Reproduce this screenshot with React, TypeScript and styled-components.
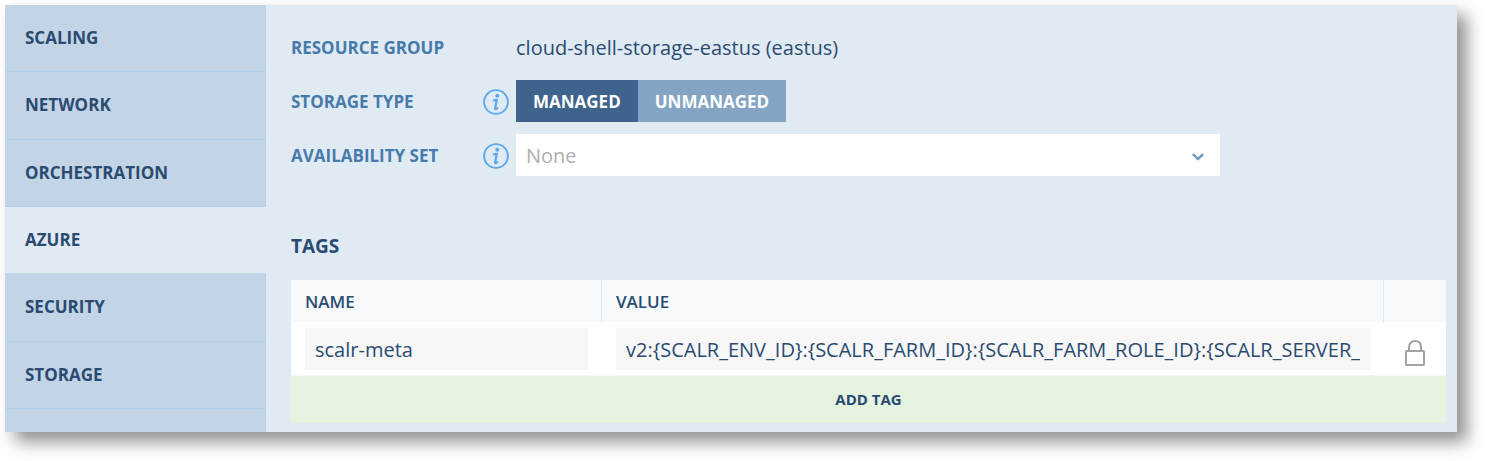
import React from "react";
import styled, { createGlobalStyle } from "styled-components";

const navy = "#2a4b71";

const GlobalStyle = createGlobalStyle`
  * { box-sizing: border-box; }
  body {
    margin: 0;
    background: #fff;
    color: ${navy};
    font-family: "Open Sans", "Noto Sans", sans-serif;
  }
  button, input, select { font-family: inherit; color: inherit; margin: 0; border: 0; border-radius: 0; }
`;

const Panel = styled.div`
  display: flex;
  margin: 5px 29px 29px 5px;
  background: #e0eaf3;
  box-shadow: 10px 10px 16px rgba(0, 0, 0, 0.43);
`;

const Sidebar = styled.nav`
  display: flex;
  flex-direction: column;
  flex: none;
  width: 261px;
  &::after {
    content: "";
    height: 23px;
    background: #c2d4e5;
    border-right: 1px solid #bad2ea;
  }
`;

const SideLink = styled.a<{ $active?: boolean }>`
  display: flex;
  align-items: center;
  flex: 1 0 auto;
  padding: 0 20px;
  font-size: 17px;
  line-height: 24px;
  font-weight: 700;
  color: ${navy};
  text-decoration: none;
  background: ${(p) => (p.$active ? "#e0eaf3" : "#c2d4e5")};
  border-bottom: 1px solid ${(p) => (p.$active ? "#c2d4e5" : "#b4cfe9")};
  border-right: 1px solid ${(p) => (p.$active ? "#e0eaf3" : "#bad2ea")};
`;

const Content = styled.main`
  flex: 1;
  min-width: 0;
  padding: 21px 11px 9px 25px;
`;

const Fields = styled.div`
  display: flex;
  flex-direction: column;
  gap: 12px;
`;

const Field = styled.div`
  display: flex;
  align-items: center;
  height: 42px;
`;

const LabelCell = styled.div`
  display: flex;
  align-items: center;
  justify-content: space-between;
  flex: none;
  width: 225px;
  padding: 2px 7px 0 0;
`;

const Label = styled.label`
  font-size: 17px;
  line-height: 24px;
  font-weight: 700;
  color: #457bab;
`;

const FieldValue = styled.output`
  padding-top: 2px;
  font-size: 20px;
  line-height: 28px;
`;

const Toggle = styled.div`
  display: flex;
  height: 42px;
`;

const ToggleButton = styled.button<{ $on?: boolean }>`
  padding: 2px 17px 0;
  font-size: 17px;
  line-height: 24px;
  font-weight: 700;
  color: #fff;
  background: ${(p) => (p.$on ? "#3e638c" : "#84a4c3")};
`;

const SelectBox = styled.div`
  position: relative;
  flex: 0 1 704px;
  height: 42px;
`;

const Select = styled.select`
  appearance: none;
  width: 100%;
  height: 100%;
  padding: 0 40px 0 10px;
  background: #fff;
  && { color: #afafaf; }
  font-size: 20px;
`;

const Chevron = styled.svg`
  position: absolute;
  right: 16px;
  top: 19px;
  pointer-events: none;
`;

const Heading = styled.h2`
  margin: 56px 0 20px;
  font-size: 19px;
  line-height: 28px;
  font-weight: 700;
`;

const Table = styled.table`
  width: 100%;
  table-layout: fixed;
  border-collapse: separate;
  border-spacing: 0;
  background: #fff;
`;

const HeadCell = styled.th<{ $width?: number }>`
  width: ${(p) => (p.$width ? `${p.$width}px` : "auto")};
  height: 42px;
  padding: 2px 14px 0;
  text-align: left;
  font-size: 17px;
  line-height: 24px;
  font-weight: 600;
  background: #f6fafd;
  border-right: 1px solid #e0eaf3;
  &:last-child { border-right: 0; }
`;

const Cell = styled.td`
  height: 54px;
  padding: 6px 14px 5px;
  border-bottom: 1px solid #f3f8fc;
  line-height: 0;
`;

const LockCell = styled(Cell)`
  padding: 9px 0 0;
  text-align: center;
`;

const TextInput = styled.input`
  width: 100%;
  height: 42px;
  padding: 0 10px;
  font-size: 20px;
  background: #f7f7f7;
`;

const AddButton = styled.button`
  display: block;
  width: 100%;
  height: 47px;
  padding: 0 0 2px;
  font-size: 15px;
  line-height: 20px;
  font-weight: 700;
  background: #e4f4e0;
`;

const InfoIcon = () => (
  <svg width="26" height="26" viewBox="0 0 26 26" aria-hidden="true">
    <circle cx="13" cy="13" r="11.9" fill="none" stroke="#5ba9ee" strokeWidth="1.9" />
    <circle cx="14.3" cy="6.8" r="2" fill="#5ba9ee" />
    <path
      d="M10.8 11.4 L13.9 10.8 L12.1 19 Q11.8 20.6 13 20 L14.3 19.2"
      fill="none"
      stroke="#5ba9ee"
      strokeWidth="2.2"
      strokeLinejoin="round"
      strokeLinecap="round"
    />
  </svg>
);

const LockIcon = () => (
  <svg width="22" height="28" viewBox="0 0 22 28" role="img" aria-label="Locked">
    <g fill="none" stroke="#a3a3a3" strokeWidth="2">
      <rect x="2" y="12" width="18" height="14" rx="0.6" />
      <path d="M5 12 V8.4 C5 4.4 7.3 2 11 2 S17 4.4 17 8.4 V12" />
    </g>
  </svg>
);

const sections = ["SCALING", "NETWORK", "ORCHESTRATION", "AZURE", "SECURITY", "STORAGE"];

export default function App() {
  const [managed, setManaged] = React.useState(true);
  return (
    <>
      <GlobalStyle />
      <Panel>
        <Sidebar>
          {sections.map((name) => (
            <SideLink key={name} href={`#${name.toLowerCase()}`} $active={name === "AZURE"}>
              {name}
            </SideLink>
          ))}
        </Sidebar>
        <Content>
          <Fields>
            <Field>
              <LabelCell>
                <Label htmlFor="group">RESOURCE GROUP</Label>
              </LabelCell>
              <FieldValue id="group">cloud-shell-storage-eastus (eastus)</FieldValue>
            </Field>
            <Field>
              <LabelCell>
                <Label as="span" id="storage-label">STORAGE TYPE</Label>
                <InfoIcon />
              </LabelCell>
              <Toggle role="group" aria-labelledby="storage-label">
                <ToggleButton type="button" $on={managed} aria-pressed={managed} onClick={() => setManaged(true)}>
                  MANAGED
                </ToggleButton>
                <ToggleButton type="button" $on={!managed} aria-pressed={!managed} onClick={() => setManaged(false)}>
                  UNMANAGED
                </ToggleButton>
              </Toggle>
            </Field>
            <Field>
              <LabelCell>
                <Label htmlFor="availability">AVAILABILITY SET</Label>
                <InfoIcon />
              </LabelCell>
              <SelectBox>
                <Select id="availability">
                  <option>None</option>
                </Select>
                <Chevron width="12" height="8" viewBox="0 0 12 8" aria-hidden="true">
                  <path d="M0.8 1.2 L6 6 L11.2 1.2" fill="none" stroke="#6c98c4" strokeWidth="2.4" />
                </Chevron>
              </SelectBox>
            </Field>
          </Fields>
          <Heading>TAGS</Heading>
          <Table>
            <thead>
              <tr>
                <HeadCell $width={311}>NAME</HeadCell>
                <HeadCell>VALUE</HeadCell>
                <HeadCell $width={62} aria-label="Locked" />
              </tr>
            </thead>
            <tbody>
              <tr>
                <Cell>
                  <TextInput aria-label="Name" readOnly value="scalr-meta" />
                </Cell>
                <Cell>
                  <TextInput
                    aria-label="Value"
                    readOnly
                    value="v2:{SCALR_ENV_ID}:{SCALR_FARM_ID}:{SCALR_FARM_ROLE_ID}:{SCALR_SERVER_ID}"
                  />
                </Cell>
                <LockCell>
                  <LockIcon />
                </LockCell>
              </tr>
            </tbody>
          </Table>
          <AddButton type="button">ADD TAG</AddButton>
        </Content>
      </Panel>
    </>
  );
}
